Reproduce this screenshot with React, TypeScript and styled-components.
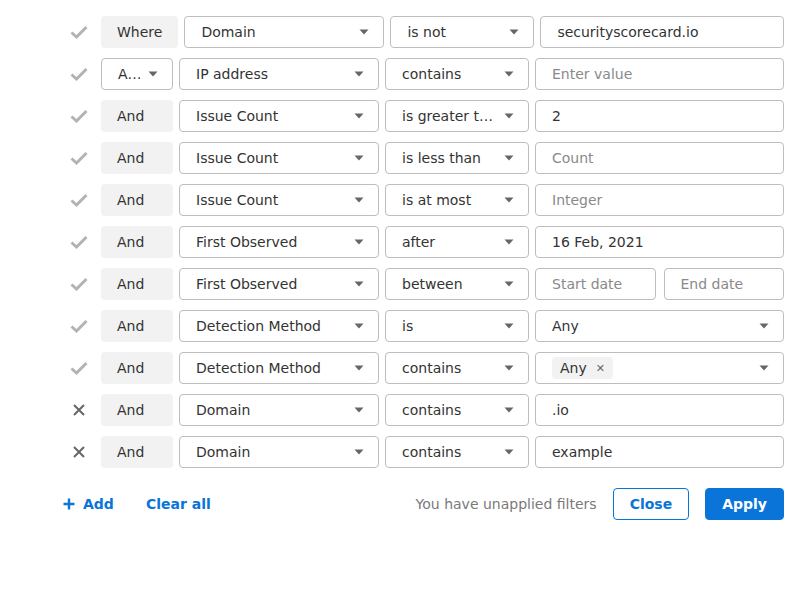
import React from 'react';
import styled, { createGlobalStyle } from 'styled-components';

const GlobalStyle = createGlobalStyle`
  body {
    margin: 0;
    background: #ffffff;
    font-family: "DejaVu Sans", "Liberation Sans", sans-serif;
    font-size: 14px;
    color: #333333;
  }
`;

const Page = styled.div`
  padding: 16px 16px 0 63px;
  display: flex;
  flex-direction: column;
`;

const Rows = styled.div`
  display: flex;
  flex-direction: column;
  gap: 10px;
`;

const Row = styled.div`
  display: flex;
  align-items: center;
  gap: 6px;
  height: 32px;
`;

const IconCell = styled.div`
  width: 32px;
  height: 32px;
  flex: none;
  display: flex;
  align-items: center;
  justify-content: center;
`;

const Connector = styled.div`
  min-width: 72px;
  height: 32px;
  box-sizing: border-box;
  padding: 0 16px;
  display: flex;
  align-items: center;
  background: #f2f2f2;
  border-radius: 4px;
  flex: none;
`;

const Box = styled.div<{ $width?: number; $muted?: boolean }>`
  box-sizing: border-box;
  height: 32px;
  border: 1px solid #bdbdbd;
  border-radius: 4px;
  background: #fff;
  display: flex;
  align-items: center;
  padding: 0 14px 0 16px;
  gap: 8px;
  color: ${(p) => (p.$muted ? '#8a8a8a' : '#333333')};
  ${(p) => (p.$width ? `width: ${p.$width}px; flex: none;` : 'flex: 1; min-width: 0;')}
`;

const ConnectorSelect = styled(Box)`
  width: 72px;
  flex: none;
`;

const Label = styled.span`
  flex: 1;
  white-space: nowrap;
  overflow: hidden;
  text-overflow: ellipsis;
`;

const Pair = styled.div`
  flex: 1;
  display: flex;
  gap: 8px;
  min-width: 0;
`;

const Chip = styled.span`
  display: inline-flex;
  align-items: center;
  gap: 9px;
  height: 22px;
  padding: 0 8px;
  border-radius: 4px;
  background: #f2f2f2;
  color: #333;
`;

const ChipX = styled.span`
  font-size: 11px;
  color: #666;
`;

const Spacer = styled.span`
  flex: 1;
`;

const Footer = styled.div`
  display: flex;
  align-items: center;
  margin-top: 20px;
  height: 32px;
`;

const LinkButton = styled.button`
  border: none;
  background: none;
  padding: 0;
  font: inherit;
  font-weight: bold;
  color: #0a74d8;
  display: inline-flex;
  align-items: center;
  gap: 8px;
  cursor: pointer;
  margin-right: 32px;
`;

const Notice = styled.span`
  margin-left: auto;
  color: #7a7a7a;
  margin-right: 16px;
`;

const Button = styled.button<{ $primary?: boolean }>`
  box-sizing: border-box;
  height: 32px;
  padding: 0 16px;
  border-radius: 4px;
  font: inherit;
  font-weight: bold;
  border: 1px solid #0a74d8;
  background: ${(p) => (p.$primary ? '#0a74d8' : '#ffffff')};
  color: ${(p) => (p.$primary ? '#ffffff' : '#0a74d8')};
  margin-left: ${(p) => (p.$primary ? '16px' : '0')};
`;

const Caret = () => (
  <svg width="10" height="6" viewBox="0 0 10 6" style={{ flex: 'none' }}>
    <path d="M0.5 0.5 L9.5 0.5 L5 5.5 Z" fill="#666" />
  </svg>
);

const Check = () => (
  <svg width="18" height="14" viewBox="0 0 18 14">
    <path d="M1.5 7.5 L6.5 12 L16.5 2" fill="none" stroke="#b3b3b3" strokeWidth="3" />
  </svg>
);

const Cross = () => (
  <svg width="12" height="12" viewBox="0 0 12 12">
    <path d="M1 1 L11 11 M11 1 L1 11" stroke="#666" strokeWidth="2" />
  </svg>
);

const Select = ({ label, width }: { label: string; width?: number }) => (
  <Box $width={width}>
    <Label>{label}</Label>
    <Caret />
  </Box>
);

const Input = ({ value, placeholder }: { value?: string; placeholder?: string }) => (
  <Box $muted={!value}>
    <Label>{value ?? placeholder}</Label>
  </Box>
);

type Filter = {
  active: boolean;
  field: string;
  op: string;
  value: React.ReactNode;
};

const filters: Filter[] = [
  { active: true, field: 'IP address', op: 'contains', value: <Input placeholder="Enter value" /> },
  { active: true, field: 'Issue Count', op: 'is greater than', value: <Input value="2" /> },
  { active: true, field: 'Issue Count', op: 'is less than', value: <Input placeholder="Count" /> },
  { active: true, field: 'Issue Count', op: 'is at most', value: <Input placeholder="Integer" /> },
  { active: true, field: 'First Observed', op: 'after', value: <Input value="16 Feb, 2021" /> },
  {
    active: true,
    field: 'First Observed',
    op: 'between',
    value: (
      <Pair>
        <Input placeholder="Start date" />
        <Input placeholder="End date" />
      </Pair>
    ),
  },
  { active: true, field: 'Detection Method', op: 'is', value: <Select label="Any" /> },
  {
    active: true,
    field: 'Detection Method',
    op: 'contains',
    value: (
      <Box>
        <Chip>
          Any <ChipX>✕</ChipX>
        </Chip>
        <Spacer />
        <Caret />
      </Box>
    ),
  },
  { active: false, field: 'Domain', op: 'contains', value: <Input value=".io" /> },
  { active: false, field: 'Domain', op: 'contains', value: <Input value="example" /> },
];

export default function App() {
  return (
    <>
      <GlobalStyle />
      <Page>
        <Rows>
          <Row>
            <IconCell>
              <Check />
            </IconCell>
            <Connector>Where</Connector>
            <Select label="Domain" width={200} />
            <Select label="is not" width={144} />
            <Input value="securityscorecard.io" />
          </Row>
          {filters.map((f, i) => (
            <Row key={i}>
              <IconCell>{f.active ? <Check /> : <Cross />}</IconCell>
              {i === 0 ? (
                <ConnectorSelect>
                  <Label>And</Label>
                  <Caret />
                </ConnectorSelect>
              ) : (
                <Connector>And</Connector>
              )}
              <Select label={f.field} width={200} />
              <Select label={f.op} width={144} />
              {f.value}
            </Row>
          ))}
        </Rows>
        <Footer>
          <LinkButton>
            <svg width="12" height="12" viewBox="0 0 12 12">
              <path d="M6 0.5 V11.5 M0.5 6 H11.5" stroke="#0a74d8" strokeWidth="2.4" />
            </svg>
            Add
          </LinkButton>
          <LinkButton>Clear all</LinkButton>
          <Notice>You have unapplied filters</Notice>
          <Button>Close</Button>
          <Button $primary>Apply</Button>
        </Footer>
      </Page>
    </>
  );
}
